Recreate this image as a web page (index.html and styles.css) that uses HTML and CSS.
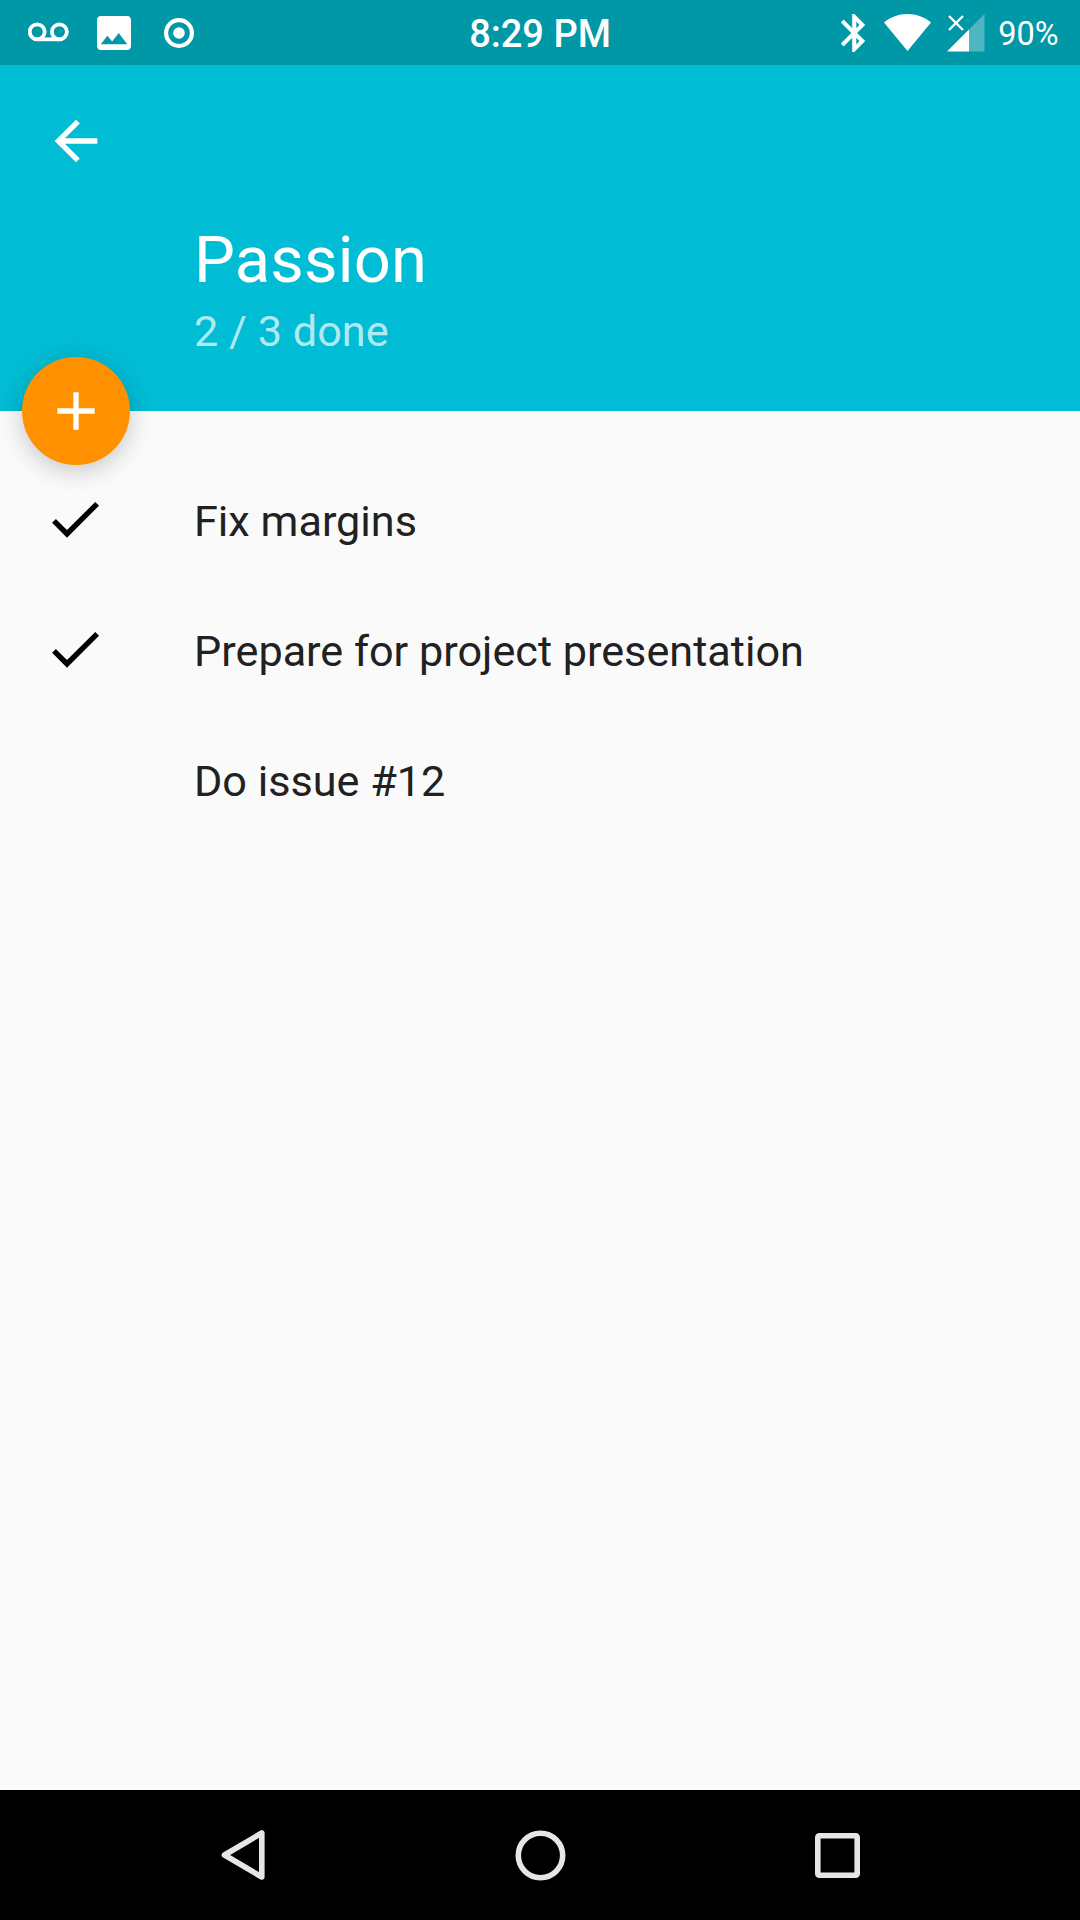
FILE: index.html
```html
<!DOCTYPE html>
<html lang="en">
<head>
<meta charset="utf-8">
<title>Passion</title>
<link rel="stylesheet" href="styles.css">
</head>
<body>
<div class="screen">
  <div class="status">
    <div class="notifications">
      <span class="cell"><svg class="voicemail" width="42" height="20" viewBox="0 0 42 20"><g fill="none" stroke="#fff" stroke-width="3.8"><circle cx="9.2" cy="9.8" r="7.5"/><circle cx="31.4" cy="9.8" r="7.5"/><path d="M9.2 17.3h22.2"/></g></svg></span>
      <span class="cell"><svg class="picture" width="34" height="34" viewBox="3 3 18 18"><path fill="#fff" d="M21 19V5c0-1.1-.9-2-2-2H5c-1.1 0-2 .9-2 2v14c0 1.1.9 2 2 2h14c1.1 0 2-.9 2-2zM8.500 13.500l2.500 3.010L14.500 12l4.500 6H5l3.500-4.500z"/></svg></span>
      <span class="cell"><svg width="30" height="30" viewBox="0 0 30 30"><circle cx="15" cy="15" r="12.900" fill="none" stroke="#fff" stroke-width="4.200"/><circle cx="15" cy="15" r="5.800" fill="#fff"/></svg></span>
    </div>
    <div class="clock">8:29 PM</div>
    <div class="system">
      <svg class="bluetooth" width="24" height="38" viewBox="5 2 12.710 20"><path fill="#fff" stroke="#fff" stroke-width=".2" d="M17.710 7.710L12 2h-1v7.590L6.410 5 5 6.410 10.590 12 5 17.590 6.410 19 11 14.410V22h1l5.710-5.710-4.300-4.290 4.300-4.290zM13 5.830l1.880 1.880L13 9.590V5.830zm1.880 10.460L13 18.170v-3.760l1.880 1.880z"/></svg>
      <svg class="wifi" width="47" height="37" viewBox="0 0 47 37"><path fill="#fff" d="M23.500 37L0 8.500C6.500 3 14.500 0 23.500 0S40.500 3 47 8.500z"/></svg>
      <svg class="signal" width="38" height="38" viewBox="0 0 38 38"><path fill="#fff" fill-opacity=".3" d="M22 15.500L37.500 0v37.500H22z"/><path fill="#fff" d="M0 37.500l22-22v22z"/><path fill="none" stroke="#fff" stroke-width="2.400" d="M2 2l14 14M16 2L2 16"/></svg>
      <span class="battery">90%</span>
    </div>
  </div>
  <header class="header">
    <svg class="back" width="64" height="64" viewBox="0 0 24 24"><path fill="#fff" d="M20 11H7.830l5.590-5.590L12 4l-8 8 8 8 1.410-1.410L7.830 13H20v-2z"/></svg>
    <h1 class="title">Passion</h1>
    <p class="subtitle">2 / 3 done</p>
    <button class="fab" aria-label="Add"><svg width="64" height="64" viewBox="0 0 24 24"><path fill="#fff" d="M19 13h-6v6h-2v-6H5v-2h6V5h2v6h6v2z"/></svg></button>
  </header>
  <ul class="tasks">
    <li class="task"><span class="mark"><svg width="64" height="64" viewBox="0 0 24 24"><path d="M9 16.170L4.830 12l-1.420 1.410L9 19 21 7l-1.410-1.410z"/></svg></span>Fix margins</li>
    <li class="task"><span class="mark"><svg width="64" height="64" viewBox="0 0 24 24"><path d="M9 16.170L4.830 12l-1.420 1.410L9 19 21 7l-1.410-1.410z"/></svg></span>Prepare for project presentation</li>
    <li class="task"><span class="mark"></span>Do issue #12</li>
  </ul>
  <nav class="navbar">
    <svg width="45" height="52" viewBox="0 0 45 52"><path d="M40.800 4v44L3.500 26z"/></svg>
    <svg width="52" height="52" viewBox="0 0 52 52"><circle cx="25.500" cy="26.500" r="22.200"/></svg>
    <svg width="45" height="45" viewBox="0 0 45 45"><rect x="2.800" y="2.800" width="39.400" height="39.400" rx="1.500"/></svg>
  </nav>
</div>
</body>
</html>
```
FILE: styles.css
```css
* {
  box-sizing: border-box;
}

body {
  margin: 0;
  font-family: Roboto, sans-serif;
}

svg {
  display: block;
  flex: none;
}

.screen {
  width: 1080px;
  height: 1920px;
  display: flex;
  flex-direction: column;
  background: #fafafa;
  overflow: hidden;
}

.status {
  flex: none;
  height: 65px;
  display: grid;
  grid-template: 65px / 1fr auto 1fr;
  background: #0097a7;
  color: #fff;
}

.notifications {
  display: flex;
  padding-left: 16px;
}

.cell {
  width: 65px;
  display: flex;
  align-items: center;
  justify-content: center;
}

.voicemail {
  margin-bottom: 2px;
}

.picture {
  margin-top: 1px;
}

.clock {
  padding-top: 2px;
  font-size: 38px;
  font-weight: 500;
  line-height: 65px;
}

.system {
  display: flex;
  align-items: center;
  justify-content: flex-end;
  padding-right: 21.5px;
}

.wifi {
  margin-left: 19px;
}

.signal {
  margin: 1px 13.5px 0 16px;
}

.battery {
  padding-top: 4px;
  font-size: 32.5px;
  line-height: 65px;
}

.header {
  position: relative;
  flex: none;
  height: 346px;
  padding: 44px 0 0 194px;
  background: #00bcd4;
  color: #fff;
}

.back {
  margin-left: -150px;
}

.title {
  margin: 49px 0 0;
  font-size: 65px;
  font-weight: 400;
  line-height: 76px;
  letter-spacing: 0.15px;
}

.subtitle {
  margin: 8px 0 0;
  font-size: 43.3px;
  line-height: 52px;
  color: rgba(255, 255, 255, 0.7);
}

.fab {
  position: absolute;
  left: 22px;
  bottom: -54px;
  width: 108px;
  height: 108px;
  padding: 0;
  border: 0;
  border-radius: 50%;
  display: flex;
  align-items: center;
  justify-content: center;
  background: #ff9100;
  box-shadow: 0 6px 24px rgba(0, 0, 0, 0.2);
}

.tasks {
  flex: 1;
  margin: 0;
  padding: 45px 0 0;
  list-style: none;
}

.task {
  height: 130px;
  display: flex;
  align-items: center;
  color: #212121;
  font-size: 43.2px;
}

.mark {
  width: 194px;
  padding: 0 0 4px 43px;
}

.navbar {
  flex: none;
  height: 130px;
  padding: 0 94px 0 95px;
  display: grid;
  grid-template-columns: repeat(3, 297px);
  align-items: center;
  justify-items: center;
  background: #000;
  fill: none;
  stroke: #e6e6e6;
  stroke-width: 5.6;
  stroke-linejoin: round;
}
```
